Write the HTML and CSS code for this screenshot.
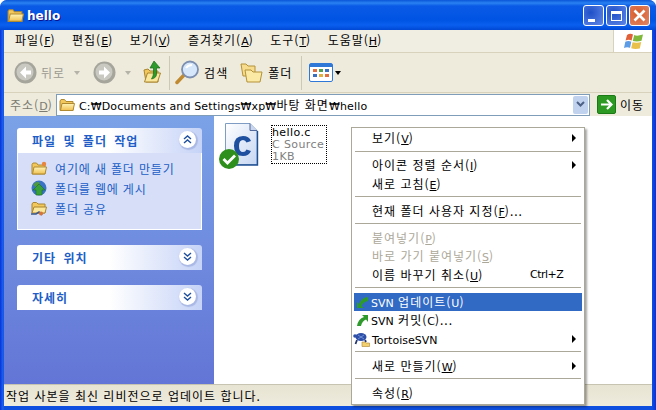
FILE: index.html
```html
<!DOCTYPE html>
<html lang="ko">
<head>
  <meta charset="UTF-8" />
  <title>hello</title>
  <link rel="stylesheet" href="styles.css">
</head>
<body>
  <svg class="defs" width="0" height="0">
    <defs>
      <linearGradient id="fold" x1="0" y1="0" x2="0" y2="1">
        <stop offset="0" stop-color="#fff4b8"/>
        <stop offset="1" stop-color="#f0c050"/>
      </linearGradient>
      <linearGradient id="doc" x1="0" y1="0" x2="1" y2="1">
        <stop offset="0" stop-color="#fff"/>
        <stop offset="1" stop-color="#c6d6f2"/>
      </linearGradient>
      <symbol id="folder" viewBox="0 0 16 14">
        <path d="M1 3 L1 12.5 L14 12.5 L14 3.5 L7 3.5 L5.5 1.5 L2 1.5 Z" fill="#f2c75c" stroke="#b08a30" stroke-width="1"/>
        <path d="M1.5 12.5 L3 5.5 L15.5 5.5 L14 12.5 Z" fill="url(#fold)" stroke="#b08a30" stroke-width="1"/>
      </symbol>
    </defs>
  </svg>

  <div class="window">
    <!-- Title -->
    <div class="titlebar">
      <svg class="title-icon" width="17" height="15"><use href="#folder"/></svg>
      <span class="title-text">hello</span>
      <div class="title-btns">
        <div class="tbtn blue">
          <svg width="21" height="21"><rect x="5" y="14" width="7" height="3" fill="#fff"/></svg>
        </div>
        <div class="tbtn blue">
          <svg width="21" height="21"><path d="M5 6h11v10H5z M6 9v6h9V9z" fill="#fff" fill-rule="evenodd"/></svg>
        </div>
        <div class="tbtn red">
          <svg width="21" height="21"><path d="M5.5 5.5L15.5 15.5M15.5 5.5L5.5 15.5" stroke="#fff" stroke-width="2.6"/></svg>
        </div>
      </div>
    </div>

    <!-- Menu -->
    <div class="menubar">
      <span class="menu-item">파일(<u class="lat">F</u>)</span>
      <span class="menu-item">편집(<u class="lat">E</u>)</span>
      <span class="menu-item">보기(<u class="lat">V</u>)</span>
      <span class="menu-item">즐겨찾기(<u class="lat">A</u>)</span>
      <span class="menu-item">도구(<u class="lat">T</u>)</span>
      <span class="menu-item">도움말(<u class="lat">H</u>)</span>
      <div class="flag-box">
        <svg width="21" height="19" viewBox="0 0 21 19">
          <path d="M4 3 Q7 1 10 2.5 L8.6 8.5 Q5.5 7 2.6 8.6 Z" fill="#e0603a"/>
          <path d="M11.2 3 Q14 4.5 20 2.5 L18.5 8.8 Q14 10 9.8 9 Z" fill="#7fb83a"/>
          <path d="M2.3 9.8 Q5.5 8.4 8.3 9.8 L7 15.8 Q4 14.5 1 16 Z" fill="#5c9be6"/>
          <path d="M9.5 10.2 Q14 11.2 18.2 10 L16.8 16.5 Q12 17.5 8.2 16.2 Z" fill="#eac04c"/>
        </svg>
      </div>
    </div>

    <!-- Toolbar -->
    <div class="toolbar">
      <svg class="round-btn" width="23" height="23" viewBox="0 0 23 23">
        <circle cx="11.5" cy="11.5" r="11" fill="#a5a59c"/>
        <circle cx="11" cy="11" r="8.5" fill="#c9c9c2"/>
        <path d="M12 5.5L6 11.5l6 6v-4h5v-4h-5z" fill="#fff"/>
      </svg>
      <span class="tool-label off">뒤로</span>
      <span class="caret off-caret"></span>
      <svg class="round-btn next" width="23" height="23" viewBox="0 0 23 23">
        <circle cx="11.5" cy="11.5" r="11" fill="#a5a59c"/>
        <circle cx="11" cy="11" r="8.5" fill="#c9c9c2"/>
        <path d="M11 5.5l6 6-6 6v-4H6v-4h5z" fill="#fff"/>
      </svg>
      <span class="caret off-caret"></span>
      <svg class="up-icon" width="19" height="25" viewBox="0 0 19 25">
        <path d="M1 10l4-1 2 2h8v11H3z" fill="#f2c75c" stroke="#a98530"/>
        <path d="M1.5 22l3-9h13l-3 9z" fill="#fbe79c" stroke="#a98530"/>
        <path d="M11 1l6 7h-3.500v6q0 4-5 5 2-3 2-6V8H7z" fill="#2f9a2c" stroke="#186b16" stroke-width=".7"/>
      </svg>
      <span class="tool-sep"></span>
      <svg class="search-icon" width="25" height="25" viewBox="0 0 25 25">
        <path d="M9 15L2 22.500" stroke="#c08a30" stroke-width="3.500" stroke-linecap="round"/>
        <circle cx="15" cy="9.500" r="8" fill="#d6e6fb" stroke="#7d8fb0" stroke-width="1.800"/>
        <path d="M11 8q2-3 6-3" stroke="#fff" stroke-width="2" fill="none"/>
      </svg>
      <span class="tool-label">검색</span>
      <svg class="folders-icon" width="24" height="21" viewBox="0 0 24 21">
        <path d="M1 2h5l2 2h7v10H3z" fill="#f6dc8c" stroke="#b39238"/>
        <path d="M5 8h6l2 2h9l-2 10H7z" fill="#fbe9a6" stroke="#b39238"/>
      </svg>
      <span class="tool-label">폴더</span>
      <span class="tool-sep second"></span>
      <svg class="view-icon" width="24" height="19" viewBox="0 0 24 19">
        <rect x=".5" y=".5" width="23" height="18" rx="1.500" fill="#fff" stroke="#2f78d8"/>
        <rect x="1" y="1" width="22" height="3" fill="#2f78d8"/>
        <rect x="4" y="6" width="4" height="3" fill="#e07040"/>
        <rect x="10" y="6" width="4" height="3" fill="#50a050"/>
        <rect x="16" y="6" width="4" height="3" fill="#3a70c0"/>
        <rect x="4" y="11" width="4" height="3" fill="#3a70c0"/>
        <rect x="10" y="11" width="4" height="3" fill="#e0b040"/>
        <rect x="16" y="11" width="4" height="3" fill="#e07040"/>
      </svg>
      <span class="caret"></span>
    </div>

    <!-- Address -->
    <div class="addressbar">
      <span class="addr-label">주소(<u class="lat">D</u>)</span>
      <div class="addr-box">
        <svg class="addr-folder" width="16" height="14"><use href="#folder"/></svg>
        <span class="addr-text"><span class="lat">C:₩Documents and Settings₩xp₩</span>바탕 화면<span class="lat">₩hello</span></span>
        <div class="addr-drop">
          <svg width="9" height="7"><path d="M1 1l3.500 3.500L8 1" stroke="#4d6185" stroke-width="2" fill="none"/></svg>
        </div>
      </div>
      <div class="go-btn">
        <svg class="go-arrow" width="13" height="11"><path d="M1 5.500h10M7 1l4.500 4.500L7 10" stroke="#fff" stroke-width="2.200" fill="none"/></svg>
      </div>
      <span class="go-label">이동</span>
    </div>

    <div class="main">
      <!-- Task panes -->
      <div class="sidebar">
        <div class="pane">
          <div class="pane-head"><b>파일 및 폴더 작업</b><span class="chev">
            <svg width="9" height="9"><path d="M1 4l3.500-3L8 4M1 8l3.500-3L8 8" stroke="#1f4f9f" stroke-width="1.400" fill="none"/></svg>
          </span></div>
          <div class="pane-body">
            <div class="task">
              <svg width="16" height="15"><use href="#folder"/><circle cx="13" cy="3" r="2.200" fill="#e8843c"/></svg>
              <span>여기에 새 폴더 만들기</span>
            </div>
            <div class="task">
              <svg width="16" height="16" viewBox="0 0 16 16">
                <circle cx="8" cy="8" r="7.500" fill="#3a72c4"/>
                <path d="M2 5q3-4 6-3l1 3-4 2z" fill="#4f9a3e"/>
                <path d="M8 4l6 6h-3v5H5v-5H2z" fill="#3aa03a" stroke="#1c6e1c" stroke-width=".6"/>
              </svg>
              <span>폴더를 웹에 게시</span>
            </div>
            <div class="task">
              <svg width="16" height="15" viewBox="0 0 16 15">
                <path d="M1 3v9h13V3H7L5.500 1.500H2z" fill="#f2c75c" stroke="#a98530"/>
                <path d="M1 12l2-6h12.500L14 12z" fill="#fbe79c" stroke="#a98530"/>
                <path d="M0 13h5l3-2 3 3" stroke="#3d5a8c" stroke-width="1.600" fill="none"/>
                <circle cx="10" cy="12.500" r="2" fill="#d8743a"/>
              </svg>
              <span>폴더 공유</span>
            </div>
          </div>
        </div>
        <div class="pane">
          <div class="pane-head"><b>기타 위치</b><span class="chev">
            <svg width="9" height="9"><path d="M1 1l3.500 3L8 1M1 5l3.500 3L8 5" stroke="#1f4f9f" stroke-width="1.400" fill="none"/></svg>
          </span></div>
        </div>
        <div class="pane">
          <div class="pane-head"><b>자세히</b><span class="chev">
            <svg width="9" height="9"><path d="M1 1l3.500 3L8 1M1 5l3.500 3L8 5" stroke="#1f4f9f" stroke-width="1.400" fill="none"/></svg>
          </span></div>
        </div>
      </div>

      <!-- Files -->
      <div class="files">
        <div class="file">
          <svg class="file-icon" width="40" height="47" viewBox="0 0 40 47">
            <path d="M6.500 0.500H31l7 7V41.500H6.500Z" fill="url(#doc)" stroke="#7f9cc4"/>
            <path d="M31 .5v7h7" fill="#c9d6ee" stroke="#50689a"/>
            <path d="M38.500 8V42H14" fill="none" stroke="#1f4f94" stroke-width="1.400"/>
            <path d="M32 18q-2-5-8-5-9 0-9 10t9 10q6 0 8-5l-4.500-1.500q-1 2.500-3.500 2.500-4 0-4-6t4-6q2.500 0 3.500 2.500z" fill="#1f4f9f"/>
            <circle cx="10" cy="36" r="10" fill="#2e8f1c"/>
            <path d="M4.500 36l4 4 7.500-7.500" stroke="#fff" stroke-width="2.800" fill="none"/>
          </svg>
          <div class="file-label">
            <div class="file-name">hello.c</div>
            <div class="file-meta">C Source</div>
            <div class="file-meta">1KB</div>
          </div>
        </div>
      </div>
    </div>

    <div class="statusbar">작업 사본을 최신 리비전으로 업데이트 합니다.</div>

    <!-- Context menu -->
    <div class="ctx">
      <div class="ctx-item">보기(<u class="lat">V</u>)<i class="arrow"></i></div>
      <div class="ctx-sep"></div>
      <div class="ctx-item">아이콘 정렬 순서(<u class="lat">I</u>)<i class="arrow"></i></div>
      <div class="ctx-item">새로 고침(<u class="lat">E</u>)</div>
      <div class="ctx-sep"></div>
      <div class="ctx-item">현재 폴더 사용자 지정(<u class="lat">F</u>)...</div>
      <div class="ctx-sep"></div>
      <div class="ctx-item dim">붙여넣기(<u class="lat">P</u>)</div>
      <div class="ctx-item dim">바로 가기 붙여넣기(<u class="lat">S</u>)</div>
      <div class="ctx-item">이름 바꾸기 취소(<u class="lat">U</u>)<span class="shortcut lat">Ctrl+Z</span></div>
      <div class="ctx-sep"></div>
      <div class="ctx-item svn active">
        <svg class="svn-icon" width="13" height="13" viewBox="0 0 13 13"><path d="M12 1Q5 2 3 8L1 6v6h7L5.500 10Q7 6 12 5z" fill="#2f9a2c"/></svg>
        <span class="lat">SVN</span> 업데이트(<span class="lat">U</span>)
      </div>
      <div class="ctx-item svn">
        <svg class="svn-icon" width="13" height="13" viewBox="0 0 13 13"><path d="M1 12Q2 5 8 3L6 1h6v7L10 5.500Q6 7 5 12z" fill="#2f9a2c"/></svg>
        <span class="lat">SVN</span> 커밋(<span class="lat">C</span>)...
      </div>
      <div class="ctx-item svn tortoise">
        <svg class="svn-icon" width="17" height="16" viewBox="0 0 17 16">
          <ellipse cx="8" cy="6" rx="5.500" ry="4" fill="#2d4fa8"/>
          <path d="M5 4l6 4M11 4L5 8" stroke="#7fa0e0" stroke-width=".8"/>
          <circle cx="2" cy="5" r="1.800" fill="#2d4fa8"/>
          <path d="M4 9l-1.500 4M12 9l1 2" stroke="#22356e" stroke-width="1.800"/>
          <path d="M9 11h3l1 1h3.500v3.500H9z" fill="#f2d070" stroke="#a98530" stroke-width=".6"/>
        </svg>
        <span class="lat">TortoiseSVN</span><i class="arrow"></i>
      </div>
      <div class="ctx-sep"></div>
      <div class="ctx-item">새로 만들기(<u class="lat">W</u>)<i class="arrow"></i></div>
      <div class="ctx-sep"></div>
      <div class="ctx-item">속성(<u class="lat">R</u>)</div>
    </div>
  </div>
</body>
</html>
```

FILE: styles.css
```css
* { box-sizing: border-box; }

body {
  margin: 0;
  font-family: "Noto Sans CJK KR", sans-serif;
  font-size: 12px;
  letter-spacing: 1px;
  color: #000;
  background: #fff;
}

.defs { position: absolute; }

.lat {
  font-family: "DejaVu Sans", sans-serif;
  font-size: 11px;
  letter-spacing: 0;
}

.window {
  position: relative;
  width: 656px;
  height: 410px;
  padding: 0 4px 4px;
  display: flex;
  flex-direction: column;
  overflow: hidden;
  background: linear-gradient(90deg, #0831d9 0, #1c64f0 3px, #0f4fe0 4px, #0f4fe0 652px, #0831d9 100%);
  border-radius: 7px 7px 0 0;
}

/* title bar */
.titlebar {
  height: 30px;
  margin: 0 -4px;
  padding: 0 6px 0 7px;
  display: flex;
  align-items: center;
  background: linear-gradient(180deg, #0a56d8 0, #2a82f2 3px, #0a5ae6 6px, #0054e3 20px, #0a5ff0 25px, #0048d4 30px);
  border-radius: 7px 7px 0 0;
}

.title-icon { margin-right: 3px; }

.title-text {
  padding-top: 2px;
  font-family: "DejaVu Sans", sans-serif;
  font-weight: bold;
  font-size: 12px;
  letter-spacing: 0;
  color: #fff;
  text-shadow: 1px 1px #0f1089;
}

.title-btns {
  margin-left: auto;
  display: flex;
  gap: 2px;
}

.tbtn {
  width: 21px;
  height: 21px;
  border: 1px solid #fff;
  border-radius: 3px;
  overflow: hidden;
}
.tbtn svg { display: block; margin: -1px; }
.tbtn.blue { background: radial-gradient(circle at 35% 35%, #1f50c8, #5a82e4 90%); }
.tbtn.red { background: radial-gradient(circle at 40% 40%, #d85a28, #e08868 100%); }

/* menu */
.menubar {
  height: 23px;
  flex: none;
  padding-left: 11px;
  display: flex;
  align-items: center;
  gap: 16.5px;
  background: #f0eee2;
  border-bottom: 1px solid #d8d2bd;
}

.menu-item { line-height: 22px; }
u.lat { text-underline-offset: 1px; }

.flag-box {
  margin-left: auto;
  align-self: stretch;
  width: 39px;
  background: #fff;
  border-left: 1px solid #d8d2bd;
  display: flex;
  align-items: center;
  justify-content: center;
}

/* toolbar */
.toolbar {
  height: 40px;
  flex: none;
  padding-left: 10px;
  display: flex;
  align-items: center;
  background: #eeebdd;
  border-bottom: 1px solid #d8d2bd;
}

.round-btn.next { margin-left: 13px; }
.tool-label { margin-left: 4px; }
.tool-label.off { color: #9a9a92; }

.caret {
  width: 0;
  height: 0;
  margin-left: 2px;
  border: 3px solid transparent;
  border-top: 4px solid #000;
  border-bottom: 0;
}
.off-caret { margin-left: 9px; border-top-color: #b5b3a8; }

.up-icon { margin-left: 12px; }
.tool-sep {
  width: 1px;
  height: 34px;
  margin-left: 7px;
  background: #cdc9b8;
}
.search-icon { margin-left: 5px; }
.folders-icon { margin-left: 12px; }
.tool-sep.second { margin-left: 9px; }
.view-icon { margin-left: 7px; }

/* address */
.addressbar {
  height: 23px;
  flex: none;
  padding-left: 6px;
  display: flex;
  align-items: center;
  background: #eeebdd;
}

.addr-label { width: 46px; color: #7b7b72; }

.addr-box {
  width: 534px;
  height: 22px;
  display: flex;
  align-items: center;
  background: #fff;
  border: 1px solid #7f9db9;
  padding-left: 2px;
}

.addr-text { margin-left: 4px; letter-spacing: 1px; }
.addr-text .lat { font-size: 11px; letter-spacing: .15px; }

.addr-drop {
  margin-left: auto;
  margin-right: 1px;
  width: 15px;
  height: 18px;
  background: #c1d2ee;
  border-radius: 2px;
  display: flex;
  align-items: center;
  justify-content: center;
}

.go-btn {
  width: 19px;
  height: 19px;
  margin-left: 7px;
  border-radius: 2px;
  background: #2c9a22;
  border: 1px solid #1c7a16;
  display: flex;
  align-items: center;
  justify-content: center;
}

.go-label { margin-left: 4px; }

/* main */
.main {
  flex: 1;
  display: flex;
  min-height: 0;
  background: #fff;
}

.sidebar {
  width: 210px;
  padding: 12px 12px 0 13px;
  display: flex;
  flex-direction: column;
  gap: 15px;
  background: linear-gradient(180deg, #7ba2e7 0, #6375d6 100%);
}

.pane-head {
  height: 25px;
  padding-left: 15px;
  display: flex;
  align-items: center;
  justify-content: space-between;
  border-radius: 3px 3px 0 0;
  background: linear-gradient(90deg, #fff 0, #fff 50%, #c6d3f7 100%);
  color: #215dc6;
}
.pane-head b { font-weight: bold; word-spacing: 3px; }

.chev {
  width: 17px;
  height: 17px;
  margin: -3px 6px 0 0;
  border-radius: 50%;
  background: #fff;
  box-shadow: 1px 1px 1px 1px #a9b8e4;
  display: flex;
  align-items: center;
  justify-content: center;
}

.pane-body {
  height: 77px;
  padding: 5px 0 0 13px;
  background: #d6dff7;
  border: 1px solid #fff;
  border-top: 0;
}

.task {
  height: 20px;
  display: flex;
  align-items: center;
  gap: 8px;
  color: #215dc6;
  letter-spacing: .85px;
}

.files {
  flex: 1;
  padding: 7px 0 0 5px;
}

.file { display: flex; align-items: flex-start; }

.file-label {
  margin: 3px 0 0 13px;
  width: 54px;
  height: 37px;
  padding-top: 1px;
  outline: 1px dotted #000;
  font-family: "DejaVu Sans", sans-serif;
  font-size: 11px;
  line-height: 12px;
  letter-spacing: .4px;
  white-space: nowrap;
}
.file-meta { color: #808080; }

/* status */
.statusbar {
  height: 22px;
  flex: none;
  padding-left: 2px;
  line-height: 22px;
  background: linear-gradient(180deg, #e8e4d3 0, #eeebdd 100%);
  border-top: 1px solid #c8c4b2;
}

/* context menu */
.ctx {
  position: absolute;
  left: 351px;
  top: 127px;
  width: 234px;
  padding: 1px 2px 2px;
  background: #fff;
  border: 1px solid #aca899;
  box-shadow: 2px 2px 2px rgba(0, 0, 0, .35);
}

.ctx-item {
  position: relative;
  height: 18.5px;
  line-height: 18px;
  padding-left: 18px;
  white-space: nowrap;
}
.ctx-item.dim { color: #aca899; }
.ctx-item.active { background: #316ac5; color: #fff; line-height: 17px; }
.ctx-item.svn { padding-left: 17px; }
.ctx-item.tortoise { padding-left: 18px; }

.ctx-sep {
  height: 8.5px;
  padding-top: 3px;
}
.ctx-sep::after {
  content: "";
  display: block;
  height: 1px;
  margin: 0 1px;
  background: #aca899;
}

.arrow {
  position: absolute;
  right: 6px;
  top: 5px;
  width: 0;
  height: 0;
  border: 4px solid transparent;
  border-left: 4px solid #000;
  border-right: 0;
}

.shortcut {
  position: absolute;
  left: 176px;
  letter-spacing: -.5px;
}

.svn-icon {
  position: absolute;
  left: 2px;
  top: 3px;
}
.tortoise .svn-icon { left: -1px; top: 1px; }
```
